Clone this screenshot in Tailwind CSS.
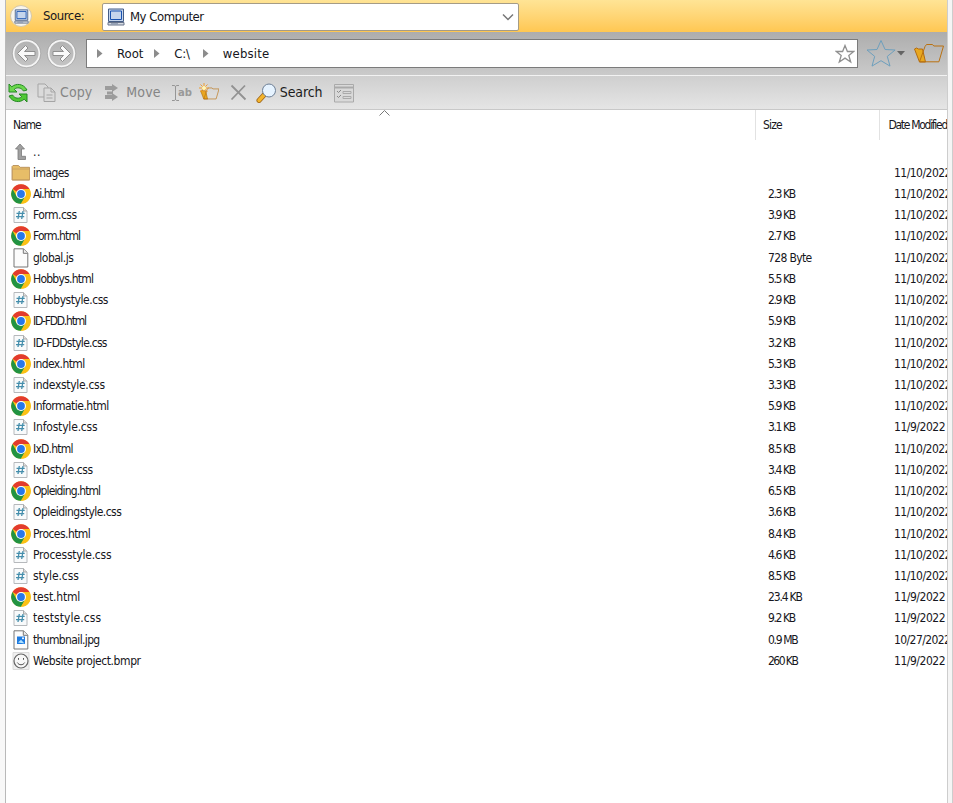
<!DOCTYPE html>
<html lang="en"><head><meta charset="utf-8"><title>File browser</title>
<script src="https://cdn.jsdelivr.net/npm/@tailwindcss/browser@4"></script></head>
<body class="w-[953px] h-[803px] overflow-hidden flex bg-[#f8f8f8] text-[#161620] text-[12.5px] font-['DejaVu_Sans_Condensed','DejaVu_Sans',sans-serif] [font-stretch:condensed] whitespace-nowrap">
<svg class="hidden">
<defs>
<linearGradient id="blue" x1="0" y1="0" x2="1" y2="1"><stop stop-color="#1665d8"/><stop offset="1" stop-color="#8fd0ff"/></linearGradient>
<linearGradient id="gold" x1="0" y1="0" x2="0" y2="1"><stop stop-color="#fff3a8"/><stop offset="1" stop-color="#efb020"/></linearGradient>
<linearGradient id="fold" x1="0" y1="0" x2="1" y2="1"><stop stop-color="#fff3c8"/><stop offset="1" stop-color="#e5b458"/></linearGradient>
<linearGradient id="star" x1="0" y1="0" x2="0" y2="1"><stop stop-color="#7fb2d4"/><stop offset="1" stop-color="#8fcdf4"/></linearGradient>
<linearGradient id="nav" x1="0" y1="0" x2="0" y2="1"><stop stop-color="#e8e8e8"/><stop offset="1" stop-color="#c4c4c4"/></linearGradient>
<symbol id="pc" viewBox="0 0 18 18"><path d="M1.500 1h15v12.500h-15z" fill="#c5d5ec" stroke="#455d86"/><path d="M3.500 3h11v8.500h-11z" fill="url(#blue)" stroke="#1852b0"/><path d="M1 14.500h16v2.500H1z" fill="#d6dbe3" stroke="#67738a"/><path d="M4 15.800h7" stroke="#7d8ca5"/></symbol>
<symbol id="chrome" viewBox="0 0 20 20"><circle cx="10" cy="10" r="9.800" fill="#fbc116"/><path d="M10 10 1.500 5.100A9.800 9.800 0 0 1 18.500 5.100H10z" fill="#e33b2e"/><path d="M1.500 5.100A9.800 9.800 0 0 0 10 19.800l4.200-7.300L10 10 5.700 12.400z" fill="#229342"/><path d="M10 5.100h8.500a9.800 9.800 0 0 1-8.500 14.700l4.300-7.300z" fill="#fbc116"/><circle cx="10" cy="10" r="5" fill="#fff"/><circle cx="10" cy="10" r="3.900" fill="#2878ea"/></symbol>
<symbol id="css" viewBox="0 0 20 20"><path d="M3 2.500h9.500L16 6v11.500H3z" fill="#f8fafb" stroke="#b6b9bc"/><path d="M12.500 2.500V6H16" fill="#ddd" stroke="#aaa"/><path d="M8.300 6 7 14M12 6l-1.300 8M5.500 8.400h8.200M5 11.600h8.200" stroke="#458eac" stroke-width="1.300" fill="none"/></symbol>
<symbol id="page" viewBox="0 0 20 20"><path d="M3 .8h9.500L16.800 5v14H3z" fill="#fcfcfc" stroke="#777"/><path d="M12.300 1v4.300h4.200" fill="#eee" stroke="#777"/></symbol>
<symbol id="jpg" viewBox="0 0 20 20"><use href="#page"/><path d="M6 6.500h8V14H6z" fill="#1e7be0"/><path d="m7 12.500 3-2.700 3.500 3.700z" fill="#b3e2ff"/><circle cx="12" cy="8.300" r="1" fill="#fff"/></symbol>
<symbol id="bmpr" viewBox="0 0 20 20"><path d="M2 1.500h16v17H2z" fill="#f0f0f0" stroke="#dcdcdc"/><circle cx="10" cy="10" r="7" fill="#f8f8f8" stroke="#666" stroke-width="1.200"/><path d="M7.500 7v1.800M12.500 7v1.800M6.300 11.500c1.500 3 5.900 3 7.400 0" fill="none" stroke="#555"/></symbol>
<symbol id="folder" viewBox="0 0 20 20"><path d="M1 5V3.500l1-1h5.500l1.700 1.800h9.300V17H1z" fill="#e7bd68" stroke="#ae8650" stroke-width=".8"/><path d="M1.500 6H18.500v11H1.500z" fill="url(#fold)" stroke="#c6a066" stroke-width=".8"/></symbol>
<symbol id="up" viewBox="0 0 20 20"><path d="M9 2 4.500 7H7v10.500h7.500v-3.200h-4V7H13.500z" fill="#a0a0a0" stroke="#7a7a7a" stroke-width=".8"/></symbol>
<symbol id="open" viewBox="0 0 30 22"><path d="m1 6 2-1 2 1h4l3 13H6z" fill="#e8a820" stroke="#b26b12"/><path d="M11.500 3.500 13 1.500h6l1.300 1.500H30l-4.600 15.800H6z" fill="url(#gold)" stroke="#ba7110"/></symbol>
</defs></svg>
<div class="w-[6px] shrink-0 border-r border-[#b9b9b9]"></div>
<main class="w-[941px] shrink-0 flex flex-col overflow-hidden bg-white">
 <header class="h-8 shrink-0 flex items-center bg-gradient-to-b from-[#ffe495] to-[#ffc751]">
  <div class="ml-[4px] w-[22px] h-[22px] rounded-full bg-[#f8f5ed] border border-[#d4c8ab] flex items-center justify-center"><svg class="w-[15px] h-[15px]"><use href="#pc"/></svg></div>
  <span class="ml-[11px] w-[59px]"><span data-w="46" class="text-[13px]">Source:</span></span>
  <div class="-mt-px w-[417px] h-[28px] bg-white border border-[#a59c86] rounded-xs flex items-center pl-[4px] pr-[4px] relative top-px"><svg class="w-[18px] h-[18px]"><use href="#pc"/></svg><span data-w="85" class="ml-[5px] text-[13px]">My Computer</span><svg class="ml-auto w-[12px] h-[8px]" fill="none" stroke="#777" stroke-width="1.500"><path d="m1 1.500 5 5 5-5"/></svg></div>
 </header>
 <nav class="h-[43px] shrink-0 flex items-center bg-gradient-to-b from-[#adadad] to-[#cacaca] text-[13px]">
  <svg class="ml-[5px] w-[31px] h-[31px] shrink-0" viewBox="0 0 31 31"><circle cx="15.500" cy="15.500" r="13" fill="url(#nav)" stroke="#f5f5f5" stroke-width="2"/><circle cx="15.500" cy="15.500" r="14.300" fill="none" stroke="#999" stroke-width=".6"/><path d="m6.500 15.500 8-8 2.500 2.500-3.500 3.500H24v4H13.500L17 21l-2.500 2.500z" fill="#fafafa" stroke="#8f8f8f"/></svg>
  <svg class="ml-[4px] w-[31px] h-[31px] shrink-0" viewBox="0 0 31 31"><circle cx="15.500" cy="15.500" r="13" fill="url(#nav)" stroke="#f5f5f5" stroke-width="2"/><circle cx="15.500" cy="15.500" r="14.300" fill="none" stroke="#999" stroke-width=".6"/><path d="m24.500 15.500-8-8L14 10l3.500 3.500H7v4h10.500L14 21l2.500 2.500z" fill="#fafafa" stroke="#8f8f8f"/></svg>
  <div class="ml-[9px] w-[772px] h-[29px] shrink-0 bg-white border border-[#7b7b7b] flex items-center">
   <svg class="ml-[10px] w-[6px] h-[9px]"><path d="M0 0v9l5.500-4.500z" fill="#8c8c8c"/></svg><span data-w="31" class="ml-[14px]">Root</span>
   <svg class="ml-[11px] w-[6px] h-[9px]"><path d="M0 0v9l5.500-4.500z" fill="#8c8c8c"/></svg><span data-w="19" class="ml-[14px]">C:\</span>
   <svg class="ml-[13px] w-[6px] h-[9px]"><path d="M0 0v9l5.500-4.500z" fill="#8c8c8c"/></svg><span data-w="50" class="ml-[14px]">website</span>
   <svg class="ml-auto mr-[2px] w-[20px] h-[20px]" viewBox="0 0 20 20"><path d="m10 1.500 2.400 6h6.400l-5 4 1.900 6.500-5.700-3.900L4.300 18l1.900-6.500-5-4h6.400z" fill="#fff" stroke="#909090" stroke-width="1.300"/></svg>
  </div>
  <svg class="ml-[8px] w-[30px] h-[29px] shrink-0" viewBox="0 0 30 29"><path d="m15 1.500 4.100 9 10 .5-7.800 6.400 2.700 9.700-9-5.400-9 5.400 2.700-9.700L1 11l10-.5z" fill="url(#star)" stroke="#6d9fbd"/></svg>
  <svg class="ml-px w-[8px] h-[5px] shrink-0"><path d="M0 0h8L4 4.500z" fill="#646464"/></svg>
  <svg class="ml-[8px] w-[31px] h-[22px] shrink-0"><use href="#open"/></svg>
 </nav>
 <section class="h-[35px] shrink-0 border-t border-[#f2f2f2] border-b border-b-[#c8c8c8] flex items-center bg-gradient-to-b from-[#cfcfcf] to-[#e5e5e5] text-[#858585] text-[14px]">
  <svg class="ml-[2px] w-[20px] h-[20px]" viewBox="0 0 20 20"><path d="M1 1v8h8L6.300 6.300C9 4 13 4.200 15.500 8L19 7C15.500.5 8 0 3.800 3.800z" fill="#6bd74c" stroke="#248922"/><path d="M19 19v-8h-8l2.700 2.700C11 16 7 15.800 4.500 12L1 13c3.500 6.500 11 7 15.200 3.200z" fill="#51c836" stroke="#248922"/></svg>
  <svg class="ml-[9px] w-[19px] h-[19px]" viewBox="0 0 19 19" fill="#dadada" stroke="#a5a5a5"><path d="M1 1h7l3 3v10H1z"/><path d="M7 5h7l4 4v9.500H7z"/><path d="M14 5v4h4M9.500 12h6M9.500 15h6" fill="none"/></svg>
  <span data-w="35" class="ml-[4px]">Copy</span>
  <svg class="ml-[12px] w-[15px] h-[17px]" viewBox="0 0 15 17" fill="#9c9c9c"><path d="M1 2h7V0l6 4-6 4V6H1zM3 7.500h6v3H3zM1 11h7V9l6 4-6 4v-2H1z"/></svg>
  <span data-w="38" class="ml-[7px]">Move</span>
  <svg class="ml-[11px] w-[20px] h-[18px]" viewBox="0 0 20 18"><path d="M0 1.500h2q1 0 1.500 1Q4 1.500 5 1.500h2M3.500 2v14M0 16.500h2q1 0 1.500-1 .5 1 1.500 1h2" fill="none" stroke="#969696"/><text x="6" y="12" font-size="11" font-weight="bold" textLength="14" lengthAdjust="spacingAndGlyphs" fill="#999">ab</text></svg>
  <svg class="ml-[7px] w-[21px] h-[20px]" viewBox="0 0 21 20"><svg y="4" width="21" height="14" viewBox="0 0 30 22"><use href="#open"/></svg><path d="M5 0v10M0 5h10M1.500 1.500l7 7M8.500 1.500l-7 7" stroke="#ef9c31"/><circle cx="5" cy="5" r="2" fill="#fff6b8"/></svg>
  <svg class="ml-[10px] w-[17px] h-[17px]" viewBox="0 0 17 17"><path d="m1.500 1.500 14 14M15 1.500l-13.500 14" stroke="#929292" stroke-width="1.800"/></svg>
  <svg class="ml-[9px] w-[21px] h-[20px]" viewBox="0 0 21 20"><path d="M8 12 3 17.500" stroke="#9e661b" stroke-width="5" stroke-linecap="round"/><path d="M8 12 3 17.500" stroke="#f3b42c" stroke-width="3.400" stroke-linecap="round"/><circle cx="13" cy="7.500" r="6.500" fill="#e6f3ff" stroke="#6d7f96"/><circle cx="13" cy="7.500" r="5" fill="url(#blue)"/></svg>
  <span data-w="43" class="ml-[3px] text-[#1c1c1c]">Search</span>
  <svg class="ml-[12px] w-[20px] h-[20px]" viewBox="0 0 20 20" fill="none" stroke="#aaa"><path d="M.5 1.500h19v17.500H.5z" fill="#d9d9d9"/><path d="M1 4.500h18" stroke-width="2"/><path d="m3 8 1.500 1.500L7 7M3 13l1.500 1.500L7 12" stroke="#8a8a8a"/><path d="M9 8.500h8v2H9zM9 13.500h8v2H9z"/></svg>
 </section>
 <div class="h-[30px] shrink-0 flex relative text-[12px] leading-[30px]">
  <span class="w-[754px] pl-[7px] border-r border-[#e2e2e2]"><span data-w="34">Name</span></span><span class="w-[125px] border-r border-[#e2e2e2] pl-[7px]"><span data-w="24">Size</span></span><span class="pl-[8px]"><span data-w="77">Date Modified</span></span>
  <svg class="absolute left-[373px] top-0 w-[11px] h-[6px]" fill="none" stroke="#777"><path d="m.5 5.500 5-5 5 5"/></svg>
 </div>
 <div id="rows" class="pt-px"></div>
</main>
<aside class="w-[6px] shrink-0 border-x border-[#cdcdcd] bg-[#f5f5f5]"></aside>
<script>
const files=[['up','..',9,'','',0],['folder','images',42,'','11/10/2022',0],['chrome','Ai.html',42,'2.3 KB','11/10/2022',38],['css','Form.css',54,'3.9 KB','11/10/2022',38],['chrome','Form.html',60,'2.7 KB','11/10/2022',38],['page','global.js',50,'728 Byte','11/10/2022',53],['chrome','Hobbys.html',75,'5.5 KB','11/10/2022',38],['css','Hobbystyle.css',91,'2.9 KB','11/10/2022',38],['chrome','ID-FDD.html',74,'5.9 KB','11/10/2022',38],['css','ID-FDDstyle.css',97,'3.2 KB','11/10/2022',38],['chrome','index.html',63,'5.3 KB','11/10/2022',38],['css','indexstyle.css',85,'3.3 KB','11/10/2022',38],['chrome','Informatie.html',93,'5.9 KB','11/10/2022',38],['css','Infostyle.css',78,'3.1 KB','11/9/2022',38],['chrome','IxD.html',52,'8.5 KB','11/10/2022',38],['css','IxDstyle.css',74,'3.4 KB','11/10/2022',38],['chrome','Opleiding.html',85,'6.5 KB','11/10/2022',38],['css','Opleidingstyle.css',108,'3.6 KB','11/10/2022',38],['chrome','Proces.html',70,'8.4 KB','11/10/2022',38],['css','Processtyle.css',93,'4.6 KB','11/10/2022',38],['css','style.css',53,'8.5 KB','11/10/2022',38],['chrome','test.html',54,'23.4 KB','11/9/2022',46],['css','teststyle.css',77,'9.2 KB','11/9/2022',38],['jpg','thumbnail.jpg',81,'0.9 MB','10/27/2022',41],['bmpr','Website project.bmpr',129,'260 KB','11/9/2022',41]];
document.getElementById('rows').innerHTML=files.map(([icon,name,w,size,date,sw])=>`<div class="h-[21.23px] flex items-center text-[12px]"><svg class="w-[20px] h-[20px] ml-[5px] shrink-0"><use href="#${icon}"/></svg><span class="w-[735px] shrink-0 pl-[2px]"><span data-w="${w}">${name}</span></span><span class="w-[126px] shrink-0 pl-[2px]"><span data-w="${sw}">${size}</span></span><span class="pl-[2px]"><span data-w="${date.length===10?67:60}">${date}</span></span></div>`).join('');
document.querySelectorAll('[data-w]').forEach(e=>{const n=e.textContent.length;if(n){e.style.letterSpacing=(+e.dataset.w-e.getBoundingClientRect().width)/n+'px'}});
</script>
</body></html>
